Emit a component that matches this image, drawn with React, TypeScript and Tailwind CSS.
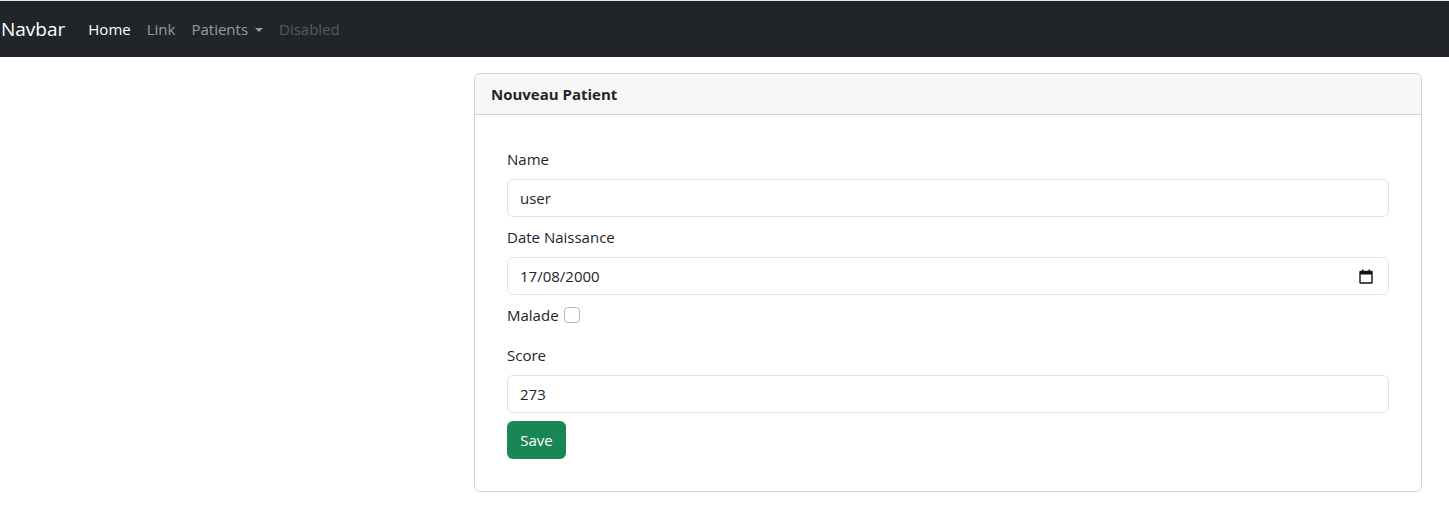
import React from "react";

function CalendarIcon() {
  return (
    <svg width="14" height="15" viewBox="0 0 14 15" fill="none">
      <rect x="1" y="2.5" width="12" height="11.5" rx="0.5" stroke="#111" strokeWidth="1.4" fill="none" />
      <rect x="1" y="2.5" width="12" height="3" fill="#111" />
      <rect x="3" y="0.5" width="1.5" height="3" fill="#111" />
      <rect x="9.5" y="0.5" width="1.5" height="3" fill="#111" />
    </svg>
  );
}

export default function App() {
  return (
    <div className="min-h-[528px] bg-white font-['Segoe_UI','Open_Sans',sans-serif] text-[#212529]">
      <div className="h-px bg-[#e6e6e6]" />
      <nav className="h-[56px] bg-[#212529] flex items-center py-2">
        <span className="text-[19px] leading-[30px] py-[5px] mr-[15px] pl-px text-white">Navbar</span>
        <ul className="flex items-center text-[15px] leading-6">
          <li className="px-2 py-2 text-white">Home</li>
          <li className="px-2 py-2 text-[rgba(255,255,255,0.55)]">Link</li>
          <li className="px-2 py-2 text-[rgba(255,255,255,0.55)] flex items-center">
            Patients
            <span className="ml-[7px] mt-[1px] w-0 h-0 border-t-[4px] border-t-[rgba(255,255,255,0.55)] border-x-[4px] border-x-transparent" />
          </li>
          <li className="px-2 py-2 text-[rgba(255,255,255,0.25)]">Disabled</li>
        </ul>
      </nav>
      <div className="pt-4 flex">
        <div className="ml-[474px] w-[948px] border border-[#d3d3d3] rounded-[6px] overflow-hidden">
          <div className="bg-[#f7f7f7] border-b border-[#d3d3d3] px-4 py-2 text-[15px] leading-6 font-bold">
            Nouveau Patient
          </div>
          <div className="p-8 text-[15px] leading-6">
            <label className="block mb-2">Name</label>
            <div className="h-[38px] border border-[#dee2e6] rounded-[6px] px-3 flex items-center mb-2">user</div>
            <label className="block mb-2">Date Naissance</label>
            <div className="h-[38px] border border-[#dee2e6] rounded-[6px] pl-3 pr-[15px] flex items-center justify-between mb-2">
              <span>17/08/2000</span>
              <CalendarIcon />
            </div>
            <div className="flex items-center mb-4">
              <span>Malade</span>
              <span className="ml-[5px] w-4 h-4 border border-[#adb5bd] rounded-[4px] bg-white" />
            </div>
            <label className="block mb-2">Score</label>
            <div className="h-[38px] border border-[#dee2e6] rounded-[6px] px-3 flex items-center mb-2">273</div>
            <button className="h-[38px] w-[59px] rounded-[6px] bg-[#198754] text-white text-[15px]">Save</button>
          </div>
        </div>
      </div>
    </div>
  );
}
